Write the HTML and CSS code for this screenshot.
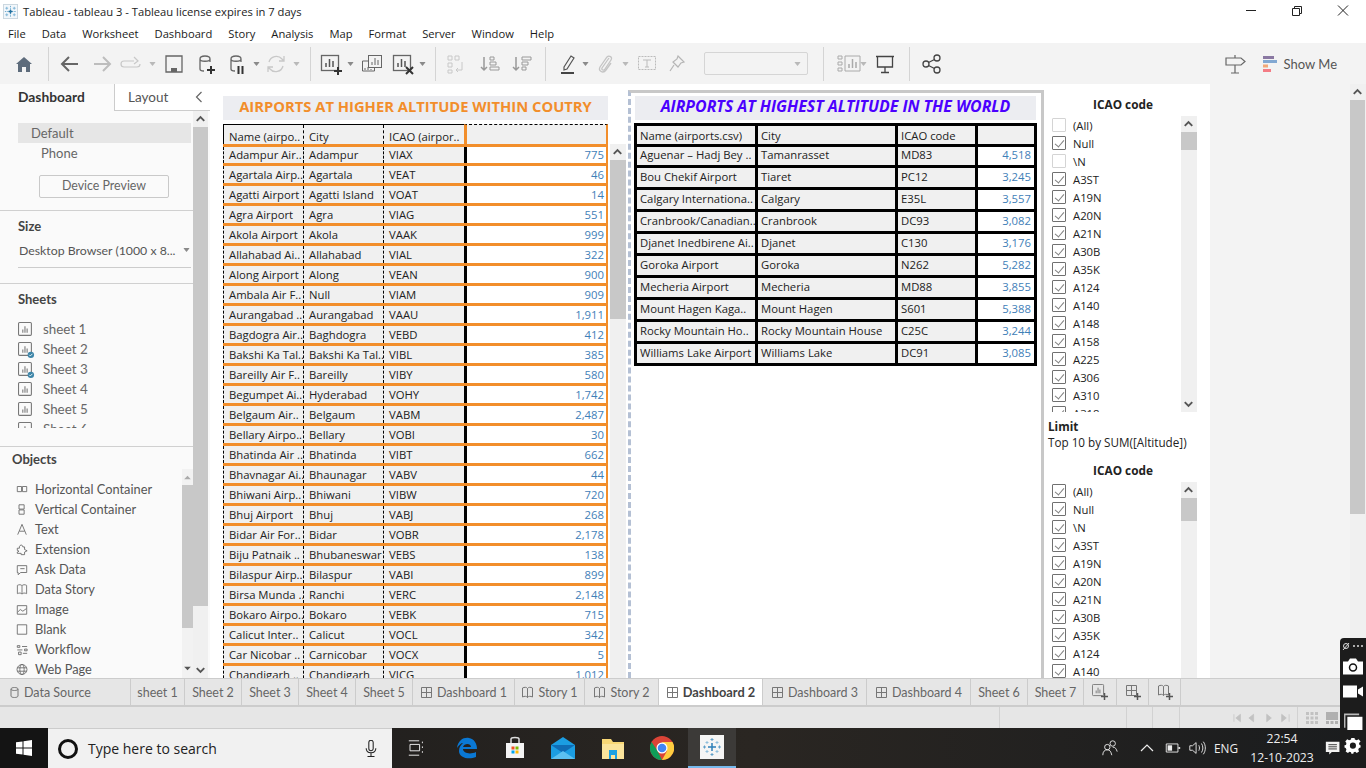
FILE: index.html
```html
<!DOCTYPE html>
<html lang="en">
<head>
<meta charset="utf-8">
<title>Tableau - tableau 3</title>
<link rel="stylesheet" href="styles.css">
</head>
<body>
<svg class="defs" aria-hidden="true">
  <symbol id="caret" viewBox="0 0 8 5"><path d="M0 0h8L4 5z" fill="#8a8a8a"/></symbol>
  <symbol id="up" viewBox="0 0 16 16"><path d="M4 10l4-4 4 4" fill="none" stroke="#555" stroke-width="2"/></symbol>
  <symbol id="down" viewBox="0 0 16 16"><path d="M4 6l4 4 4-4" fill="none" stroke="#555" stroke-width="2"/></symbol>
  <symbol id="sheet" viewBox="0 0 14 14"><rect x=".5" y=".5" width="12" height="12" rx="1" fill="none" stroke="#777"/><path d="M4.5 10V7M6.5 10V4M8.5 10V6" stroke="#777"/></symbol>
  <symbol id="dash" viewBox="0 0 13 13"><path d="M1.5 1.5h10v10h-10zM6.5 1.5v10M1.5 6.5h10" fill="none" stroke="#777"/></symbol>
  <symbol id="story" viewBox="0 0 13 13"><path d="M1.5 2c2-1 4-1 5 .5 1-1.500 3-1.500 5-.5v9c-2-1-4-1-5 .5-1-1.500-3-1.500-5-.5zM6.500 2.500v9" fill="none" stroke="#777"/></symbol>
  <symbol id="cyl" viewBox="0 0 24 24"><path d="M7 7c0-4 10-4 10 0v3M7 7c0 3 10 3 10 0M7 7v10c0 1.500 2 2 4 2" fill="none" stroke="#666" stroke-width="1.300"/></symbol>
  <symbol id="bars" viewBox="0 0 24 24"><rect x="2.500" y="3.500" width="17" height="15" fill="none" stroke="#666" stroke-width="1.300"/><path d="M7 15v-4M10.500 15V7M14 15v-6" stroke="#555" stroke-width="1.500"/></symbol>
</svg>

<div class="app">
  <header class="titlebar">
    <svg class="logo" viewBox="0 0 16 16"><rect x=".5" y=".5" width="15" height="15" fill="#f2f7fb" stroke="#c9d6df"/><path d="M8 2v12M2 8h12" stroke="#6aa6cc" stroke-dasharray="1.500 1"/><path d="M4 3v3M2.500 4.500h3M12 3v3M10.500 4.500h3M4 10v3M2.500 11.500h3M12 10v3M10.500 11.500h3" stroke="#7fb5d8"/><path d="M6 8h4M8 6v4" stroke="#1f6f9e" stroke-width="1.500"/></svg>
    <span class="wintitle">Tableau - tableau 3 - Tableau license expires in 7 days</span>
    <div class="winbtns">
      <svg viewBox="0 0 46 23"><path d="M18 10.500h10" stroke="#222"/></svg>
      <svg viewBox="0 0 46 23"><path d="M18.500 8.500h7v7h-7zM20.500 8.500v-2h7v7h-2" fill="none" stroke="#222"/></svg>
      <svg viewBox="0 0 46 23"><path d="M18 5.500l10 10M28 5.500l-10 10" stroke="#222"/></svg>
    </div>
  </header>

  <nav class="menubar">
    <span>File</span><span>Data</span><span>Worksheet</span><span>Dashboard</span><span>Story</span><span>Analysis</span><span>Map</span><span>Format</span><span>Server</span><span>Window</span><span>Help</span>
  </nav>

  <div class="toolbar">
    <svg class="ti" viewBox="0 0 24 24"><path d="M4 12l8-7 8 7h-2v8h-4v-5h-4v5H6v-8z" fill="#5d6b7b"/></svg>
    <i class="sep"></i>
    <svg class="ti" viewBox="0 0 24 24"><path d="M20 12H5M11 5l-7 7 7 7" fill="none" stroke="#666" stroke-width="2"/></svg>
    <svg class="ti" viewBox="0 0 24 24"><path d="M4 12h15M13 5l7 7-7 7" fill="none" stroke="#bdbdbd" stroke-width="2"/></svg>
    <svg class="ti" viewBox="0 0 24 24"><path d="M15 9H5c-2 0-3 1.500-3 3s1 3 3 3h13c2 0 3-1.500 3-3M15 5l4 4-4 3" fill="none" stroke="#c8c8c8" stroke-width="1.200"/></svg>
    <svg class="tc off" viewBox="0 0 8 5"><use href="#caret"/></svg>
    <svg class="ti" viewBox="0 0 24 24"><path d="M4 4h16v16H4z" fill="none" stroke="#666" stroke-width="1.300"/><path d="M9 20v-4h6v4" fill="#666"/></svg>
    <svg class="ti" viewBox="0 0 24 24"><use href="#cyl"/><path d="M14 18h8M18 14v8" stroke="#333" stroke-width="2"/></svg>
    <svg class="ti" viewBox="0 0 24 24"><use href="#cyl"/><path d="M14.500 14v8M18.500 14v8" stroke="#333" stroke-width="2"/></svg>
    <svg class="tc" viewBox="0 0 8 5"><use href="#caret"/></svg>
    <svg class="ti" viewBox="0 0 24 24"><path d="M5 10a7.500 7.500 0 0 1 13-3l2 2M19 14a7.500 7.500 0 0 1-13 3l-2-2M20 4v5h-5M4 20v-5h5" fill="none" stroke="#c8c8c8" stroke-width="1.300"/></svg>
    <svg class="tc off" viewBox="0 0 8 5"><use href="#caret"/></svg>
    <i class="sep"></i>
    <svg class="ti" viewBox="0 0 24 24"><use href="#bars"/><path d="M15 19h8M19 15v8" stroke="#333" stroke-width="2"/></svg>
    <svg class="tc" viewBox="0 0 8 5"><use href="#caret"/></svg>
    <svg class="ti" viewBox="0 0 24 24"><rect x="8.500" y="3.500" width="13" height="12" fill="#f3f3f3" stroke="#666"/><path d="M12 13v-3M15 13V6M18 13V8" stroke="#666"/><path d="M8 9H2.500v10h12v-3" fill="none" stroke="#666"/><path d="M5 18v-2M8 18v-3M11 18v-1" stroke="#666"/></svg>
    <svg class="ti" viewBox="0 0 24 24"><use href="#bars"/><path d="M15 15l7 7M22 15l-7 7" stroke="#333" stroke-width="2"/></svg>
    <svg class="tc" viewBox="0 0 8 5"><use href="#caret"/></svg>
    <i class="sep"></i>
    <svg class="ti" viewBox="0 0 24 24"><path d="M3 4h4v4H3zM10 4h4v4h-4zM3 11h4v4H3zM3 18h4v3H3zM17 10v8h-6M13 16l-2 2 2 2" fill="none" stroke="#c8c8c8"/></svg>
    <svg class="ti" viewBox="0 0 24 24"><path d="M6 5v13M3 15l3 3 3-3" fill="none" stroke="#999" stroke-width="1.500"/><path d="M12 5h4v3h-4zM12 10h6v3h-6zM12 15h9v3h-9z" fill="none" stroke="#999"/></svg>
    <svg class="ti" viewBox="0 0 24 24"><path d="M6 5v13M3 15l3 3 3-3" fill="none" stroke="#999" stroke-width="1.500"/><path d="M12 5h9v3h-9zM12 10h6v3h-6zM12 15h4v3h-4z" fill="none" stroke="#999"/></svg>
    <i class="sep"></i>
    <svg class="ti" viewBox="0 0 24 24"><path d="M8 15L15 4l3 2-7 11-3 1z" fill="none" stroke="#555" stroke-width="1.200"/><path d="M5 21h13" stroke="#444" stroke-width="2"/></svg>
    <svg class="tc" viewBox="0 0 8 5"><use href="#caret"/></svg>
    <svg class="ti" viewBox="0 0 24 24"><path d="M16 6l-7 10c-1 2 2 3 3 1l6-9c2-3-2-5-4-3l-7 10c-2 4 3 7 6 3l5-7" fill="none" stroke="#c4c4c4" stroke-width="1.300"/></svg>
    <svg class="tc off" viewBox="0 0 8 5"><use href="#caret"/></svg>
    <svg class="ti" viewBox="0 0 24 24"><path d="M3.500 4.500h17v13h-17z" fill="none" stroke="#bbb" stroke-dasharray="2 1"/><path d="M8 8h8M12 8v7M10 15h4" fill="none" stroke="#bbb"/></svg>
    <svg class="ti" viewBox="0 0 24 24"><path d="M13 4l6 6-3 1-3 4-5-5 4-3zM9 13l-4 6" fill="none" stroke="#b5b5b5" stroke-width="1.200"/></svg>
    <i></i>
    <div class="combo"><svg class="tc off" viewBox="0 0 8 5"><use href="#caret"/></svg></div>
    <i class="sep"></i>
    <svg class="ti" viewBox="0 0 24 24"><path d="M1 4h4v3H1zM1 10h4v3H1zM1 16h4v3H1zM8 4h15v15H8z" fill="none" stroke="#aaa"/><path d="M12 16v-4M15.500 16V7M19 16v-6" stroke="#aaa" stroke-width="1.500"/></svg>
    <svg class="tc off" viewBox="0 0 8 5"><use href="#caret"/></svg>
    <svg class="ti" viewBox="0 0 24 24"><path d="M4.500 5v10h15V5M3 4.500h18M12 15v5M8 20.500h8" fill="none" stroke="#444" stroke-width="1.300"/></svg>
    <i class="sep"></i>
    <svg class="ti" viewBox="0 0 24 24"><circle cx="17" cy="6" r="3" fill="none" stroke="#444" stroke-width="1.300"/><circle cx="17" cy="18" r="3" fill="none" stroke="#444" stroke-width="1.300"/><circle cx="6" cy="12" r="3" fill="none" stroke="#444" stroke-width="1.300"/><path d="M8.500 10.500l6-3M8.500 13.500l6 3" stroke="#444" stroke-width="1.300"/></svg>
    <div class="tb-right">
      <svg class="ti" viewBox="0 0 24 24"><path d="M3 6h15l4 3.500-4 3.500H3zM12 3v3M12 13v8M8 21h8" fill="none" stroke="#666" stroke-width="1.200"/></svg>
      <svg class="showme-ic" viewBox="0 0 14 16"><rect width="11" height="3" fill="#8a78a2"/><rect y="4" width="14" height="3" fill="#82a8d2"/><rect y="8.500" width="5" height="3" fill="#f2a878"/><rect y="13" width="8" height="3" fill="#f47c85"/></svg>
      <span class="showme">Show Me</span>
    </div>
  </div>

  <main class="main">
    <aside class="side">
      <div class="side-tabs">
        <div class="tab-dash">Dashboard</div>
        <div class="tab-layout"><span>Layout</span><svg class="chev" viewBox="0 0 8 12"><path d="M6.500 1L1.500 6l5 5" fill="none" stroke="#666" stroke-width="1.200"/></svg></div>
      </div>
      <div class="side-body">
        <div class="side-content">
          <section class="sec sec-device">
            <div class="dev dev-on">Default</div>
            <div class="dev dev-sub">Phone</div>
            <div class="devbtn">Device Preview</div>
          </section>
          <section class="sec sec-size">
            <h3>Size</h3>
            <div class="sizesel"><span>Desktop Browser (1000 x 8...</span><svg class="tc" viewBox="0 0 8 5"><use href="#caret"/></svg></div>
          </section>
          <section class="sec sec-sheets">
            <h3>Sheets</h3>
            <div class="sheetlist">
              <div class="sitem"><svg class="sic" viewBox="0 0 14 14"><use href="#sheet"/></svg>sheet 1</div>
              <div class="sitem"><svg class="sic" viewBox="0 0 14 14"><use href="#sheet"/><circle cx="12" cy="12" r="3" fill="#3d85a8"/><path d="M10.500 12l1 1 2-2" fill="none" stroke="#fff" stroke-width=".8"/></svg>Sheet 2</div>
              <div class="sitem"><svg class="sic" viewBox="0 0 14 14"><use href="#sheet"/><circle cx="12" cy="12" r="3" fill="#3d85a8"/><path d="M10.500 12l1 1 2-2" fill="none" stroke="#fff" stroke-width=".8"/></svg>Sheet 3</div>
              <div class="sitem"><svg class="sic" viewBox="0 0 14 14"><use href="#sheet"/></svg>Sheet 4</div>
              <div class="sitem"><svg class="sic" viewBox="0 0 14 14"><use href="#sheet"/></svg>Sheet 5</div>
              <div class="sitem"><svg class="sic" viewBox="0 0 14 14"><use href="#sheet"/></svg>Sheet 6</div>
            </div>
          </section>
          <section class="sec-objects">
            <h3>Objects</h3>
            <div class="objwrap">
              <div class="objlist">
                <div class="oitem"><svg class="oic" viewBox="0 0 14 14"><path d="M1.500 3.500h5v6h-5zM7.500 3.500h5v6h-5z" fill="none" stroke="#666"/></svg>Horizontal Container</div>
                <div class="oitem"><svg class="oic" viewBox="0 0 14 14"><path d="M3.500 1.500h6v5h-6zM3.500 7.500h6v5h-6z" fill="none" stroke="#666"/></svg>Vertical Container</div>
                <div class="oitem"><svg class="oic" viewBox="0 0 14 14"><path d="M2 13L7 1l5 12M4 9h6" fill="none" stroke="#666"/></svg>Text</div>
                <div class="oitem"><svg class="oic" viewBox="0 0 14 14"><path d="M1.500 5.500h2.500c-1-4 4-5 4-1.500h2v3l3 1.500-3 1.500v3H6v-1.500H1.500V10l2-1-2-1z" fill="none" stroke="#666"/></svg>Extension</div>
                <div class="oitem"><svg class="oic" viewBox="0 0 14 14"><path d="M1.500 2.500h11v8h-7l-3 2.500v-2.500h-1zM5 6h5" fill="none" stroke="#666"/></svg>Ask Data</div>
                <div class="oitem"><svg class="oic" viewBox="0 0 14 14"><use href="#story"/></svg>Data Story</div>
                <div class="oitem"><svg class="oic" viewBox="0 0 14 14"><path d="M1.500 2.500h11v10h-11zM2 10l3-3 3 2 4-3" fill="none" stroke="#666"/></svg>Image</div>
                <div class="oitem"><svg class="oic" viewBox="0 0 14 14"><path d="M1.500 1.500h11v11h-11z" fill="none" stroke="#666"/></svg>Blank</div>
                <div class="oitem"><svg class="oic" viewBox="0 0 14 14"><path d="M1.500 2.500h3v2h-3zM7 3.500h6M1.500 7.500h6M10 6.500h3v2h-3zM3 10h3v3H3zM8 11.500h5" fill="none" stroke="#666"/></svg>Workflow</div>
                <div class="oitem"><svg class="oic" viewBox="0 0 14 14"><circle cx="7" cy="7" r="5.800" fill="none" stroke="#666"/><ellipse cx="7" cy="7" rx="2.500" ry="5.800" fill="none" stroke="#666"/><path d="M1.500 5h11M1.500 9h11" stroke="#666"/></svg>Web Page</div>
              </div>
              <div class="objscroll"><svg class="objarrow" viewBox="0 0 10 6"><path d="M1 5l4-4 4 4z" fill="#aaa"/></svg><i class="objthumb"></i><svg class="objarrow obj-down" viewBox="0 0 10 6"><path d="M1 1l4 4 4-4z" fill="#555"/></svg></div>
            </div>
          </section>
        </div>
        <div class="sidescroll"><svg class="arw" viewBox="0 0 16 16"><use href="#up"/></svg><i class="sidethumb"></i><svg class="arw arw-end" viewBox="0 0 16 16"><use href="#down"/></svg></div>
      </div>
    </aside>

    <div class="canvas">
      <div class="col-left">
        <div class="title-orange">AIRPORTS AT HIGHER ALTITUDE WITHIN COUTRY</div>
        <div class="ltable">
          <div class="lrow lhead"><span>Name (airpo..</span><span>City</span><span>ICAO (airpor..</span><span></span></div>
          <div class="lrow"><span>Adampur Air..</span><span>Adampur</span><span>VIAX</span><span class="num">775</span></div>
          <div class="lrow"><span>Agartala Airp..</span><span>Agartala</span><span>VEAT</span><span class="num">46</span></div>
          <div class="lrow"><span>Agatti Airport</span><span>Agatti Island</span><span>VOAT</span><span class="num">14</span></div>
          <div class="lrow"><span>Agra Airport</span><span>Agra</span><span>VIAG</span><span class="num">551</span></div>
          <div class="lrow"><span>Akola Airport</span><span>Akola</span><span>VAAK</span><span class="num">999</span></div>
          <div class="lrow"><span>Allahabad Ai..</span><span>Allahabad</span><span>VIAL</span><span class="num">322</span></div>
          <div class="lrow"><span>Along Airport</span><span>Along</span><span>VEAN</span><span class="num">900</span></div>
          <div class="lrow"><span>Ambala Air F..</span><span>Null</span><span>VIAM</span><span class="num">909</span></div>
          <div class="lrow"><span>Aurangabad ..</span><span>Aurangabad</span><span>VAAU</span><span class="num">1,911</span></div>
          <div class="lrow"><span>Bagdogra Air..</span><span>Baghdogra</span><span>VEBD</span><span class="num">412</span></div>
          <div class="lrow"><span>Bakshi Ka Tal..</span><span>Bakshi Ka Tal..</span><span>VIBL</span><span class="num">385</span></div>
          <div class="lrow"><span>Bareilly Air F..</span><span>Bareilly</span><span>VIBY</span><span class="num">580</span></div>
          <div class="lrow"><span>Begumpet Ai..</span><span>Hyderabad</span><span>VOHY</span><span class="num">1,742</span></div>
          <div class="lrow"><span>Belgaum Air..</span><span>Belgaum</span><span>VABM</span><span class="num">2,487</span></div>
          <div class="lrow"><span>Bellary Airpo..</span><span>Bellary</span><span>VOBI</span><span class="num">30</span></div>
          <div class="lrow"><span>Bhatinda Air ..</span><span>Bhatinda</span><span>VIBT</span><span class="num">662</span></div>
          <div class="lrow"><span>Bhavnagar Ai..</span><span>Bhaunagar</span><span>VABV</span><span class="num">44</span></div>
          <div class="lrow"><span>Bhiwani Airp..</span><span>Bhiwani</span><span>VIBW</span><span class="num">720</span></div>
          <div class="lrow"><span>Bhuj Airport</span><span>Bhuj</span><span>VABJ</span><span class="num">268</span></div>
          <div class="lrow"><span>Bidar Air For..</span><span>Bidar</span><span>VOBR</span><span class="num">2,178</span></div>
          <div class="lrow"><span>Biju Patnaik ..</span><span>Bhubaneswar</span><span>VEBS</span><span class="num">138</span></div>
          <div class="lrow"><span>Bilaspur Airp..</span><span>Bilaspur</span><span>VABI</span><span class="num">899</span></div>
          <div class="lrow"><span>Birsa Munda ..</span><span>Ranchi</span><span>VERC</span><span class="num">2,148</span></div>
          <div class="lrow"><span>Bokaro Airpo..</span><span>Bokaro</span><span>VEBK</span><span class="num">715</span></div>
          <div class="lrow"><span>Calicut Inter..</span><span>Calicut</span><span>VOCL</span><span class="num">342</span></div>
          <div class="lrow"><span>Car Nicobar ..</span><span>Carnicobar</span><span>VOCX</span><span class="num">5</span></div>
          <div class="lrow"><span>Chandigarh ..</span><span>Chandigarh</span><span>VICG</span><span class="num">1,012</span></div>
        </div>
      </div>
      <div class="tscroll"><svg class="arw" viewBox="0 0 16 16"><use href="#up"/></svg><i class="tthumb"></i></div>

      <div class="col-right">
        <div class="title-blue">AIRPORTS AT HIGHEST ALTITUDE IN THE WORLD</div>
        <div class="rtable">
          <div class="rrow rhead"><span>Name (airports.csv)</span><span>City</span><span>ICAO code</span><span></span></div>
          <div class="rrow"><span>Aguenar – Hadj Bey ..</span><span>Tamanrasset</span><span>MD83</span><span class="num">4,518</span></div>
          <div class="rrow"><span>Bou Chekif Airport</span><span>Tiaret</span><span>PC12</span><span class="num">3,245</span></div>
          <div class="rrow"><span>Calgary Internationa..</span><span>Calgary</span><span>E35L</span><span class="num">3,557</span></div>
          <div class="rrow"><span>Cranbrook/Canadian..</span><span>Cranbrook</span><span>DC93</span><span class="num">3,082</span></div>
          <div class="rrow"><span>Djanet Inedbirene Ai..</span><span>Djanet</span><span>C130</span><span class="num">3,176</span></div>
          <div class="rrow"><span>Goroka Airport</span><span>Goroka</span><span>N262</span><span class="num">5,282</span></div>
          <div class="rrow"><span>Mecheria Airport</span><span>Mecheria</span><span>MD88</span><span class="num">3,855</span></div>
          <div class="rrow"><span>Mount Hagen Kaga..</span><span>Mount Hagen</span><span>S601</span><span class="num">5,388</span></div>
          <div class="rrow"><span>Rocky Mountain Ho..</span><span>Rocky Mountain House</span><span>C25C</span><span class="num">3,244</span></div>
          <div class="rrow"><span>Williams Lake Airport</span><span>Williams Lake</span><span>DC91</span><span class="num">3,085</span></div>
        </div>
      </div>

      <div class="col-filter">
        <div class="ftitle">ICAO code</div>
        <div class="flist flist-a">
          <div class="fitems">
            <div class="fitem"><i class="cb"></i>(All)</div>
            <div class="fitem"><i class="cb on"></i>Null</div>
            <div class="fitem"><i class="cb"></i>\N</div>
            <div class="fitem"><i class="cb on"></i>A3ST</div>
            <div class="fitem"><i class="cb on"></i>A19N</div>
            <div class="fitem"><i class="cb on"></i>A20N</div>
            <div class="fitem"><i class="cb on"></i>A21N</div>
            <div class="fitem"><i class="cb on"></i>A30B</div>
            <div class="fitem"><i class="cb on"></i>A35K</div>
            <div class="fitem"><i class="cb on"></i>A124</div>
            <div class="fitem"><i class="cb on"></i>A140</div>
            <div class="fitem"><i class="cb on"></i>A148</div>
            <div class="fitem"><i class="cb on"></i>A158</div>
            <div class="fitem"><i class="cb on"></i>A225</div>
            <div class="fitem"><i class="cb on"></i>A306</div>
            <div class="fitem"><i class="cb on"></i>A310</div>
            <div class="fitem"><i class="cb on"></i>A318</div>
          </div>
          <div class="fscroll"><svg class="arw" viewBox="0 0 16 16"><use href="#up"/></svg><i class="fthumb"></i><svg class="arw arw-end" viewBox="0 0 16 16"><use href="#down"/></svg></div>
        </div>
        <div class="limit"><b>Limit</b><span>Top 10 by SUM([Altitude])</span></div>
        <div class="ftitle ftitle-b">ICAO code</div>
        <div class="flist flist-b">
          <div class="fitems">
            <div class="fitem"><i class="cb on"></i>(All)</div>
            <div class="fitem"><i class="cb on"></i>Null</div>
            <div class="fitem"><i class="cb on"></i>\N</div>
            <div class="fitem"><i class="cb on"></i>A3ST</div>
            <div class="fitem"><i class="cb on"></i>A19N</div>
            <div class="fitem"><i class="cb on"></i>A20N</div>
            <div class="fitem"><i class="cb on"></i>A21N</div>
            <div class="fitem"><i class="cb on"></i>A30B</div>
            <div class="fitem"><i class="cb on"></i>A35K</div>
            <div class="fitem"><i class="cb on"></i>A124</div>
            <div class="fitem"><i class="cb on"></i>A140</div>
          </div>
          <div class="fscroll"><svg class="arw" viewBox="0 0 16 16"><use href="#up"/></svg><i class="fthumb fthumb-b"></i></div>
        </div>
      </div>
    </div>

    <div class="gutter">
      <div class="mainscroll"><svg class="arw" viewBox="0 0 16 16"><use href="#up"/></svg><i class="mthumb"></i></div>
    </div>
  </main>

  <div class="tabs">
    <div class="tab tab-ds w131"><svg class="tabic" viewBox="0 0 13 13"><path d="M3 3c0-2 7-2 7 0v7c0 2-7 2-7 0zM3 3c0 2 7 2 7 0" fill="none" stroke="#777"/></svg>Data Source</div>
    <div class="tab w54">sheet 1</div>
    <div class="tab w57">Sheet 2</div>
    <div class="tab w57">Sheet 3</div>
    <div class="tab w57">Sheet 4</div>
    <div class="tab w57">Sheet 5</div>
    <div class="tab w102"><svg class="tabic" viewBox="0 0 13 13"><use href="#dash"/></svg>Dashboard 1</div>
    <div class="tab w70"><svg class="tabic" viewBox="0 0 13 13"><use href="#story"/></svg>Story 1</div>
    <div class="tab w74"><svg class="tabic" viewBox="0 0 13 13"><use href="#story"/></svg>Story 2</div>
    <div class="tab w104 active"><svg class="tabic" viewBox="0 0 13 13"><use href="#dash"/></svg>Dashboard 2</div>
    <div class="tab w104"><svg class="tabic" viewBox="0 0 13 13"><use href="#dash"/></svg>Dashboard 3</div>
    <div class="tab w104"><svg class="tabic" viewBox="0 0 13 13"><use href="#dash"/></svg>Dashboard 4</div>
    <div class="tab w57">Sheet 6</div>
    <div class="tab w56">Sheet 7</div>
    <div class="tab w33"><svg class="tabnew" viewBox="0 0 16 16"><use href="#sheet" width="13" height="13"/><path d="M9 12.500h7M12.500 9v7" stroke="#555" stroke-width="1.500"/></svg></div>
    <div class="tab w32"><svg class="tabnew" viewBox="0 0 16 16"><use href="#dash" width="13" height="13"/><path d="M9 12.500h7M12.500 9v7" stroke="#555" stroke-width="1.500"/></svg></div>
    <div class="tab w32"><svg class="tabnew" viewBox="0 0 16 16"><use href="#story" width="13" height="13"/><path d="M9 12.500h7M12.500 9v7" stroke="#555" stroke-width="1.500"/></svg></div>
  </div>

  <div class="status">
    <i class="st"></i><i class="st"></i><i class="st"></i><i class="st"></i><i class="st st-plain"></i>
    <div class="st st-pager">
      <svg viewBox="0 0 62 10"><path d="M1 1v8M8 1L3 5l5 4zM22 1l-5 4 5 4zM36 1l5 4-5 4zM52 1l5 4-5 4zM60 1v8" fill="#c2c2c2" stroke="#c2c2c2" stroke-width=".8"/></svg>
    </div>
    <div class="st st-view">
      <svg viewBox="0 0 12 12"><path d="M0 0h3v3H0zM4.500 0h3v3h-3zM9 0h3v3H9zM0 4.500h3v3H0zM4.500 4.500h3v3h-3zM9 4.500h3v3H9zM0 9h3v3H0zM4.500 9h3v3h-3zM9 9h3v3H9z" fill="#c2c2c2"/></svg>
      <svg viewBox="0 0 12 12"><path d="M0 0h12v8H0zM0 9h3v3H0zM4.500 9h3v3h-3zM9 9h3v3H9z" fill="#b0b0b0"/></svg>
    </div>
  </div>

  <footer class="taskbar">
    <div class="start"><svg viewBox="0 0 16 16"><path d="M0 2.300l6.500-.9v6.200H0zM7.500 1.300L16 0v7.600H7.500zM0 8.500h6.500v6.100L0 13.700zM7.500 8.500H16V16l-8.500-1.200z" fill="#fff"/></svg></div>
    <div class="search">
      <i class="cortana"></i>
      <span>Type here to search</span>
      <svg class="mic" viewBox="0 0 16 20"><path d="M5.500 2.500a2.500 2.500 0 0 1 5 0v7a2.500 2.500 0 0 1-5 0zM2.500 9c0 7 11 7 11 0M8 14v4M4 18.500h8" fill="none" stroke="#222" stroke-width="1.200"/></svg>
    </div>
    <div class="tk-icons">
      <svg class="tk" viewBox="0 0 20 20"><path d="M1 1h13M1 19h13M2.500 5.500h12v8h-12zM18 2v2M18 8v2M18 14v2" fill="none" stroke="#eee" stroke-width="1.200"/></svg>
      <svg class="tk tk-b" viewBox="0 0 24 24"><path d="M2 12C3 4 9 1 14 2c5 1 8 5 8 11H8c0 4 7 6 13 3v5c-7 3-17 1-17-6 0-4 2-6 4-8-2 0-4 2-6 5zm6-1h8c0-4-7-4-8 0z" fill="#0a78d4"/></svg>
      <svg class="tk tk-b" viewBox="0 0 24 24"><path d="M3 7h18v15H3z" fill="#f4f4f4"/><path d="M8 7V3c0-2 8-2 8 0v4" fill="none" stroke="#ddd" stroke-width="1.500"/><path d="M8.500 10.500h3v3h-3z" fill="#f25022"/><path d="M12.500 10.500h3v3h-3z" fill="#7fba00"/><path d="M8.500 14.500h3v3h-3z" fill="#00a4ef"/><path d="M12.500 14.500h3v3h-3z" fill="#ffb900"/></svg>
      <svg class="tk tk-b" viewBox="0 0 24 24"><path d="M0 9l12-8 12 8v14H0z" fill="#1b9de2"/><path d="M0 9l12 8 12-8z" fill="#0f6cb5"/><path d="M0 23l12-8 12 8z" fill="#5cc0f0"/></svg>
      <svg class="tk tk-b" viewBox="0 0 24 24"><path d="M1 3h9l2 3h11v17H1z" fill="#f8d775"/><path d="M1 8h22v15H1z" fill="#fbe49b"/><path d="M8 14h8v9h-2v-4h-4v4H8z" fill="#1ba1e2"/></svg>
      <svg class="tk tk-b" viewBox="0 0 24 24"><circle cx="12" cy="12" r="12" fill="#db4437"/><path d="M12 24A12 12 0 0 1 1.600 6L7 14l5 10z" fill="#0f9d58"/><path d="M12 6h10.500A12 12 0 0 1 12 24l5-9z" fill="#ffcd40"/><circle cx="12" cy="12" r="5.500" fill="#fff"/><circle cx="12" cy="12" r="4.300" fill="#4285f4"/></svg>
      <div class="tk-active"><svg viewBox="0 0 24 24"><rect width="24" height="24" fill="#f5f5f5"/><path d="M12 8v8M8 12h8" stroke="#2d7fb8" stroke-width="1.500"/><path d="M12 3v3M10.500 4.500h3M12 18v3M10.500 19.500h3M3 12h3M4.500 10.500v3M18 12h3M19.500 10.500v3" stroke="#5f9fc8"/><path d="M7 6v3M5.500 7.500h3M17 6v3M15.500 7.500h3M7 15v3M5.500 16.500h3M17 15v3M15.500 16.500h3" stroke="#8fbfdc"/></svg></div>
    </div>
    <div class="tray">
      <svg class="tr" viewBox="0 0 20 20"><circle cx="7" cy="9" r="3" fill="none" stroke="#eee"/><circle cx="13" cy="5" r="3" fill="none" stroke="#eee"/><path d="M2 18c0-4 2-6 5-6s4 2 5 6M13 9c3 0 4 2 5 5" fill="none" stroke="#eee"/></svg>
      <svg class="tr tr-up" viewBox="0 0 14 10"><path d="M1 8l6-6 6 6" fill="none" stroke="#eee" stroke-width="1.200"/></svg>
      <svg class="tr" viewBox="0 0 20 20"><path d="M2.500 5.500h13v9h-13z" fill="none" stroke="#eee"/><path d="M4 7h5v6H4z" fill="#eee"/><path d="M16 9h2v2h-2z" fill="#eee"/></svg>
      <svg class="tr tr-vol" viewBox="0 0 20 20"><path d="M2 7.500h3L9 4v12l-4-3.500H2zM12 7c1 2 1 4 0 6M15 5c2 3 2 7 0 10M17 3c3 4 3 10 0 14" fill="none" stroke="#eee"/></svg>
      <span class="eng">ENG</span>
      <div class="clock"><span>22:54</span><span>12-10-2023</span></div>
      <svg class="notif" viewBox="0 0 20 20"><path d="M1 2h16v12H8l-3 3v-3H1z" fill="#f2f2f2"/><path d="M4 5.500h10M4 8h10M4 10.500h10" stroke="#222"/></svg>
    </div>
  </footer>

  <div class="capture">
    <svg class="cap-top" viewBox="0 0 22 8"><circle cx="4" cy="4" r="2.500" fill="none" stroke="#ddd"/><path d="M1 8l6-7" stroke="#ddd"/><circle cx="12" cy="4" r="1" fill="#ddd"/><circle cx="16" cy="4" r="1" fill="#ddd"/><circle cx="20" cy="4" r="1" fill="#ddd"/></svg>
    <svg class="cap-ic" viewBox="0 0 20 16"><path d="M0 3h5l2-3h6l2 3h5v13H0z" fill="#fff"/><circle cx="10" cy="9" r="3.500" fill="none" stroke="#111" stroke-width="1.500"/></svg>
    <svg class="cap-ic" viewBox="0 0 20 16"><path d="M0 2h14v12H0zM15 6l5-3v10l-5-3z" fill="#fff"/></svg>
    <svg class="cap-ic cap-copy" viewBox="0 0 20 18"><path d="M0.500 .500h16v2H2v13H.500z" fill="#bbb"/><path d="M4 4h16v14H4z" fill="#fff"/></svg>
    <svg class="cap-ic" viewBox="0 0 20 20"><path d="M8 0h4l.5 3 2.500 1 2.500-1.500 2.500 3L18 7.500l.500 2.500 1.500.5v3l-2 .5-1 2 1 2.500-3 2-2-1.500-2 .5-.5 2H8l-.5-2-2-.5-2 1.500-3-2L1.500 16l-1-2L-1 13.500v-3L1 10l.5-2.500L0 5.500l2.500-3L5 4l2.500-1zM10 7a4 4 0 1 0 0 8 4 4 0 0 0 0-8z" fill="#fff" transform="scale(.9) translate(1 -1)"/></svg>
  </div>
</div>
</body>
</html>
```

FILE: styles.css
```css
* { box-sizing: border-box; }
html, body { margin: 0; padding: 0; }
body { width: 1366px; height: 768px; overflow: hidden; background: #fff; font-family: "Open Sans", "Liberation Sans", sans-serif; }
.defs { width: 0; height: 0; display: block; overflow: hidden; }
i { display: block; font-style: normal; }
h3 { margin: 0; font: 700 13px/16px "Lato", sans-serif; color: #444; }

.app { position: relative; width: 1366px; height: 768px; overflow: hidden; display: flex; flex-direction: column; }

/* title + menu */
.titlebar { height: 23px; flex: none; display: flex; align-items: center; padding-left: 3px; background: #fff; }
.logo { width: 15px; height: 15px; margin-right: 5px; }
.wintitle { font-size: 11.200px; color: #222; }
.winbtns { margin-left: auto; display: flex; }
.winbtns svg { width: 46px; height: 23px; }
.menubar { height: 20px; flex: none; display: flex; align-items: center; gap: 16px; padding-left: 8px; font-size: 11.200px; color: #1a1a1a; background: #fff; }

/* toolbar */
.toolbar { height: 41px; flex: none; background: #f3f3f3; padding-left: 8px; display: grid; align-items: center; justify-items: center;
  grid-template-columns: 32px 16px 28px 36px 22px 20px 24px 38px 24px 16px 24px 16px 12px 30px 8px 36px 26px 12px 14px 30px 36px 28px 18px 28px 6px 34px 6px 38px 22px 16px 104px 30px 22px 6px 38px 10px 36px 1fr; }
.ti { width: 24px; height: 24px; }
.tc { width: 7px; height: 4px; }
.tc.off { opacity: .55; }
.sep { width: 1px; height: 34px; background: #d4d4d4; }
.combo { width: 104px; height: 23px; border: 1px solid #d5d5d5; border-radius: 2px; display: flex; align-items: center; justify-content: flex-end; padding-right: 6px; }
.tb-right { justify-self: stretch; display: flex; align-items: center; justify-content: flex-end; padding-right: 29px; }
.showme-ic { width: 14px; height: 16px; margin-left: 16px; }
.showme { margin-left: 7px; font: 13px "Lato", sans-serif; color: #555; }

/* main */
.main { height: 594px; flex: none; display: flex; overflow: hidden; }
.side { width: 210px; flex: none; background: #fafafa; display: flex; flex-direction: column; font-family: "Lato", sans-serif; }
.side-tabs { height: 27px; flex: none; display: flex; }
.tab-dash { width: 114px; padding: 5px 0 0 18px; font: 700 13.800px/16px "Lato", sans-serif; color: #333; }
.tab-layout { width: 96px; display: flex; align-items: center; justify-content: space-between; padding: 0 7px 0 13px; border-left: 1px solid #ccc; border-bottom: 1px solid #ccc; font-size: 13.500px; color: #555; background: #fff; }
.chev { width: 8px; height: 12px; }
.side-body { flex: 1; min-height: 0; display: flex; }
.side-content { width: 193px; flex: none; display: flex; flex-direction: column; }
.sec { flex: none; border-bottom: 1px solid #d0d0d0; }
.sec-device { height: 100px; padding-top: 12px; }
.dev { height: 20px; margin-left: 18px; margin-right: 2px; padding-left: 13px; line-height: 20px; font-size: 13px; color: #666; }
.dev-on { background: #e6e6e6; }
.dev-sub { padding-left: 23px; }
.devbtn { width: 130px; height: 23px; margin: 12px 0 0 39px; border: 1px solid #c9c9c9; border-radius: 2px; text-align: center; line-height: 20px; font-size: 12.400px; color: #666; background: #fafafa; }
.sec-size { height: 73px; padding: 7px 2px 0 18px; }
.sizesel { height: 25px; margin-top: 9px; display: flex; align-items: center; justify-content: space-between; border-bottom: 1px solid #ccc; padding: 0 1px 10px 1px; font-size: 12.300px; color: #555; white-space: nowrap; }
.sec-sheets { height: 163px; padding: 7px 0 0 18px; }
.sheetlist { margin-top: 12px; height: 109px; overflow: hidden; }
.sitem { height: 20px; display: flex; align-items: center; font-size: 13.400px; color: #666; }
.sic { width: 15px; height: 15px; margin-right: 10px; overflow: visible; }
.sec-objects { flex: 1; min-height: 0; display: flex; flex-direction: column; padding-top: 4px; }
.sec-objects h3 { padding-left: 12px; }
.objwrap { flex: 1; min-height: 0; display: flex; margin-top: 2px; }
.objlist { width: 182px; flex: none; padding: 10px 0 0 16px; }
.oitem { height: 20px; display: flex; align-items: center; gap: 7px; font-size: 12.800px; color: #555; white-space: nowrap; }
.oic { width: 12px; height: 13px; flex: none; }
.objscroll { width: 11px; display: flex; flex-direction: column; background: #f2f2f2; }
.objarrow { width: 9px; height: 5px; margin: 6px 1px; }
.objthumb { height: 143px; margin-top: -1px; background: #c8c8c8; }
.obj-down { margin-top: auto; margin-bottom: 7px; }
.sidescroll { width: 15px; margin-right: 2px; background: #f0f0f0; display: flex; flex-direction: column; }
.sidethumb { height: 479px; background: #c8c8c8; }
.arw { width: 15px; height: 16px; flex: none; display: block; }
.arw-end { margin-top: auto; }

/* canvas */
.canvas { width: 1000px; flex: none; background: #fff; display: flex; align-items: flex-start; }
.col-left { width: 385px; margin: 12px 0 0 13px; flex: none; }
.title-orange, .title-blue { height: 24px; background: #ecedf1; text-align: center; line-height: 21px; font-weight: 700; white-space: nowrap; overflow: hidden; }
.title-orange { color: #f28e2b; font-size: 14.750px; }
.title-blue { color: #4b00ff; font-style: italic; font-size: 15.900px; margin-left: 1px; width: 401px; }
.ltable { height: 554px; margin-top: 4px; overflow: hidden; }
.lrow { height: 20px; display: grid; grid-template-columns: 81px 80px 81px 143px; font-size: 11.300px; line-height: 17px; color: #222; border-bottom: 3px solid #f28e2b; }
.lhead + .lrow { height: 19px; line-height: 16px; }
.lrow span { padding-left: 5px; background: #f0f0f0; border-right: 1px dashed #000; white-space: nowrap; overflow: hidden; }
.lrow span:first-child { border-left: 1px dashed #000; }
.lrow span.num { background: #fff; color: #3f80b8; text-align: right; padding-right: 2px; border-left: 3px solid #000; border-right: 2px solid #f28e2b; margin-left: -1px; }
.lhead { height: 23px; border-top: 1px solid #000; }
.lhead span { line-height: 23px; }
.lhead span:first-child { border-left: 1px solid #000; }
.lhead span:last-child { border-left: 3px solid #f28e2b; border-right: 2px solid #f28e2b; margin-left: -1px; border-top: 1px dashed #000; margin-top: -1px; }
.tscroll { width: 16px; height: 534px; margin: 60px 0 0 2px; flex: none; background: #f0f0f0; display: flex; flex-direction: column; }
.tthumb { height: 159px; background: #c8c8c8; }
.col-right { width: 416px; height: 588px; margin: 6px 0 0 2px; flex: none; border-top: 3px solid #c8c8c8; border-right: 3px solid #c8c8c8; border-left: 3px dashed #b4c0d4; padding: 3px 0 0 3px; }
.rtable { width: 403px; margin-top: 3px; background: #000; padding-top: 3px; }
.rrow { display: grid; gap: 0 3px; height: 22px; padding: 0 3px 3px; font-size: 11.300px; line-height: 18px; color: #222; grid-template-columns: 118px 137px 77px 56px; }
.rrow span { background: #f0f0f0; padding-left: 3px; white-space: nowrap; overflow: hidden; }
.rrow span.num { background: #fff; color: #3f80b8; text-align: right; padding-right: 3px; }
.rhead { height: 21px; line-height: 20px; }
.rhead + .rrow { height: 21px; line-height: 16px; }
.col-filter { width: 150px; margin: 12px 0 0 4px; flex: none; font-size: 11.300px; color: #222; }
.ftitle { height: 16px; margin-bottom: 4px; text-align: center; font-size: 11.800px; font-weight: 700; line-height: 16px; color: #222; }
.ftitle-b { margin-top: 12px; }
.flist { display: flex; overflow: hidden; }
.flist-a { height: 296px; }
.flist-b { height: 196px; }
.fitems { flex: 1; padding-left: 4px; overflow: hidden; }
.fitem { height: 18px; display: flex; align-items: center; gap: 7px; white-space: nowrap; }
.cb { width: 14px; height: 14px; flex: none; border: 1px solid #d4d4d4; border-radius: 1px; display: flex; align-items: center; justify-content: center; background: #fff; }
.cb.on { border-color: #707070; }
.cb.on::after { content: ""; width: 4px; height: 8px; margin-top: -2px; border-right: 1.500px solid #808080; border-bottom: 1.500px solid #808080; transform: rotate(40deg); }
.fscroll { width: 16px; height: 100%; flex: none; margin-right: 1px; background: #f0f0f0; display: flex; flex-direction: column; }
.fthumb { height: 18px; background: #c8c8c8; }
.fthumb-b { height: 23px; }
.limit { height: 38px; padding: 6px 0 0 0; line-height: 16px; font-size: 11.700px; }
.limit b, .limit span { display: block; }

.gutter { flex: 1; background: #f3f3f3; display: flex; justify-content: flex-end; }
.mainscroll { width: 16px; background: #f0f0f0; display: flex; flex-direction: column; padding-right: 1px; }
.mthumb { height: 414px; background: #c8c8c8; }

/* tabs + status */
.tabs { height: 29px; flex: none; display: flex; background: #e6e6e6; border-top: 1px solid #ccc; border-bottom: 2px solid #ccc; font: 12.500px "Lato", sans-serif; color: #666; }
.tab { display: flex; align-items: center; justify-content: center; gap: 4px; border-right: 1px solid #ccc; white-space: nowrap; }
.tab.active { background: #fff; font-weight: 700; font-size: 12.800px; color: #444; }
.tab-ds { justify-content: flex-start; padding-left: 8px; gap: 3px; }
.tabic { width: 13px; height: 13px; }
.tabnew { width: 16px; height: 16px; overflow: visible; }
.w131 { width: 131px; } .w54 { width: 54px; } .w57 { width: 57px; } .w56 { width: 56px; } .w102 { width: 102px; } .w70 { width: 70px; } .w74 { width: 74px; } .w104 { width: 104px; } .w33 { width: 33px; } .w32 { width: 32px; }
.status { height: 21px; flex: none; background: #e6e6e6; display: grid; grid-template-columns: 1000px 127px 26px 27px 47px 71px 1fr; }
.st { border-right: 1px solid #d2d2d2; }
.st-plain { border-right: 0; }
.st-pager { display: flex; align-items: center; justify-content: center; }
.st-pager svg { width: 58px; height: 10px; }
.st-view { border: 0; display: flex; align-items: center; gap: 8px; padding-left: 8px; }
.st-view svg { width: 12px; height: 12px; }

/* taskbar */
.taskbar { height: 40px; flex: none; display: flex; background: linear-gradient(90deg, #1b1b1b, #2a2622 55%, #1a1c1e); color: #eee; }
.start { width: 48px; display: flex; align-items: center; justify-content: center; background: #141414; }
.start svg { width: 16px; height: 16px; }
.search { width: 344px; display: flex; align-items: center; background: #f1f1f1; border-top: 1px solid #ccc; padding-left: 10px; color: #222; font-size: 14px; }
.cortana { width: 20px; height: 20px; border: 3px solid #111; border-radius: 50%; margin-right: 10px; }
.mic { width: 14px; height: 18px; margin-left: auto; margin-right: 14px; }
.tk-icons { display: grid; grid-template-columns: 48px 54px 42px 54px 46px 52px 48px; align-items: center; justify-items: center; height: 40px; }
.tk { width: 16px; height: 16px; }
.tk-b { width: 24px; height: 24px; }
.tk-active { width: 48px; height: 40px; background: #3c3a38; border-bottom: 2px solid #76b9ed; display: flex; align-items: center; justify-content: center; }
.tk-active svg { width: 24px; height: 24px; }
.tray { flex: 1; display: flex; align-items: center; padding-left: 365px; }
.tr { width: 18px; height: 18px; }
.tr-up { width: 14px; height: 10px; margin: 0 10px 0 21px; }
.tr-vol { margin-left: 6px; }
.eng { width: 28px; margin-left: 8px; font-size: 11.800px; }
.clock { width: 64px; margin-left: 8px; display: flex; flex-direction: column; align-items: center; font-size: 12.200px; line-height: 19px; }
.notif { width: 17px; height: 17px; margin-left: 11px; }

/* capture overlay */
.capture { position: absolute; right: 0; bottom: 0; width: 26px; height: 130px; background: #1c1c1c; border-top-left-radius: 4px; display: flex; flex-direction: column; align-items: center; padding-top: 4px; gap: 8px; }
.cap-top { width: 22px; height: 8px; }
.cap-ic { width: 20px; height: 17px; flex: none; }
.cap-copy { margin-top: 5px; }
```
